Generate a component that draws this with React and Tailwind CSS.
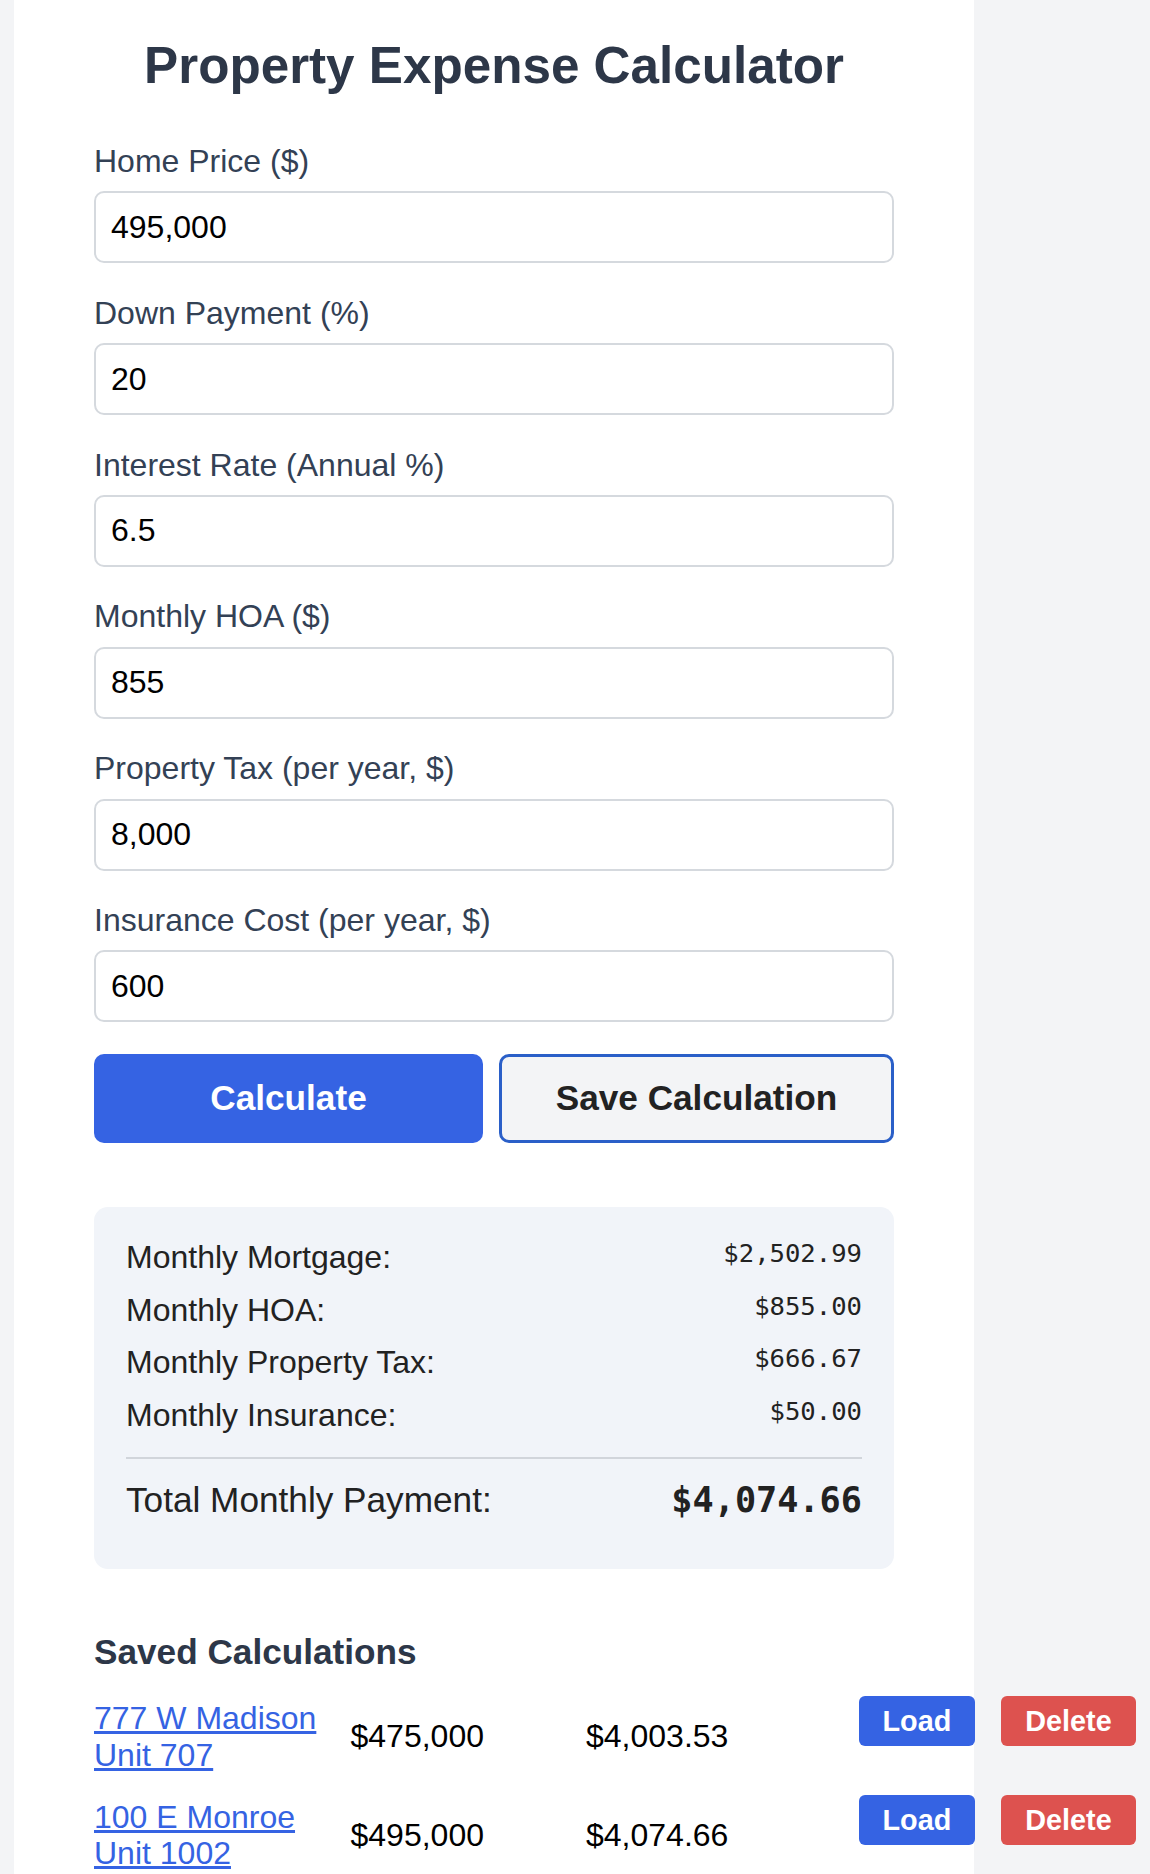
import React from "react";

const fields = [
  ["Home Price ($)", "495,000"],
  ["Down Payment (%)", "20"],
  ["Interest Rate (Annual %)", "6.5"],
  ["Monthly HOA ($)", "855"],
  ["Property Tax (per year, $)", "8,000"],
  ["Insurance Cost (per year, $)", "600"],
];

const results = [
  ["Monthly Mortgage:", "$2,502.99"],
  ["Monthly HOA:", "$855.00"],
  ["Monthly Property Tax:", "$666.67"],
  ["Monthly Insurance:", "$50.00"],
];

const saved = [
  ["777 W Madison Unit 707", "$475,000", "$4,003.53"],
  ["100 E Monroe Unit 1002", "$495,000", "$4,074.66"],
];

export default function App() {
  return (
    <div
      className="min-h-screen bg-[#f3f4f6] overflow-hidden"
      style={{ fontFamily: '"Liberation Sans", Arial, Helvetica, sans-serif' }}
    >
      <div className="ml-[14px] w-[960px] min-h-[1874px] bg-white px-[80px] pt-[36.5px] pb-[40px]">
        <h1 className="text-center text-[51.2px] leading-[1.15] font-bold text-[#2d3748] mb-[47.7px]">
          Property Expense Calculator
        </h1>

        {fields.map(([label, value]) => (
          <div key={label} className="mb-[31.5px]">
            <label className="block text-[32px] leading-[1.15] text-[#334155] mb-[11.5px]">
              {label}
            </label>
            <input
              type="text"
              readOnly
              value={value}
              className="block w-full h-[72px] border-2 border-[#d5d9de] rounded-[10px] px-[15px] text-[32px] text-black bg-white outline-none"
              style={{ fontFamily: '"Liberation Sans", Arial, sans-serif' }}
            />
          </div>
        ))}

        <div className="flex gap-[16px]">
          <button className="flex-1 h-[89px] rounded-[10px] bg-[#3563e3] text-white text-[35.2px] font-bold leading-[1.15]">
            Calculate
          </button>
          <button className="flex-1 h-[89px] rounded-[10px] bg-[#f3f4f6] border-[3px] border-[#2a5fc8] text-[#222222] text-[35.2px] font-bold leading-[1.15]">
            Save Calculation
          </button>
        </div>

        <div className="mt-[64px] bg-[#f1f4f9] rounded-[14px] px-[32px] pt-[32px] pb-[48px]">
          <div className="flex flex-col gap-[16px]">
            {results.map(([l, v]) => (
              <div key={l} className="flex justify-between text-[32px] leading-[1.15] text-[#222222]">
                <span>{l}</span>
                <span
                  className="text-[25.6px] leading-[1.15]"
                  style={{ fontFamily: '"DejaVu Sans Mono", monospace' }}
                >
                  {v}
                </span>
              </div>
            ))}
          </div>
          <div className="mt-[23px] h-[2px] bg-[#d1d5db]" />
          <div className="mt-[21px] flex justify-between text-[35.2px] leading-[1.15] text-[#222222]">
            <span>Total Monthly Payment:</span>
            <span
              className="font-bold"
              style={{ fontFamily: '"DejaVu Sans Mono", monospace' }}
            >
              $4,074.66
            </span>
          </div>
        </div>

        <h2 className="mt-[63.5px] mb-[15px] text-[35.2px] leading-[1.15] font-bold text-[#2d3748]">
          Saved Calculations
        </h2>

        <div className="w-[1060px]">
          {saved.map(([name, price, pay]) => (
            <div key={name} className="flex items-stretch py-[12.5px] text-[32px] leading-[1.15] text-black">
              <div className="w-[256.5px] shrink-0 self-center">
                <a href="#" className="text-[#3563e3] underline">
                  {name}
                </a>
              </div>
              <div className="w-[235.5px] shrink-0 self-center">{price}</div>
              <div className="w-[272.5px] shrink-0 self-center">{pay}</div>
              <div className="flex gap-[26px] self-start -mt-[3.5px] shrink-0">
                <button className="h-[50px] px-[24px] rounded-[6px] bg-[#3563e3] text-white text-[28.8px] font-bold leading-[1.15]">
                  Load
                </button>
                <button className="h-[50px] px-[24px] rounded-[6px] bg-[#dd524f] text-white text-[28.8px] font-bold leading-[1.15]">
                  Delete
                </button>
              </div>
            </div>
          ))}
        </div>
      </div>
    </div>
  );
}
